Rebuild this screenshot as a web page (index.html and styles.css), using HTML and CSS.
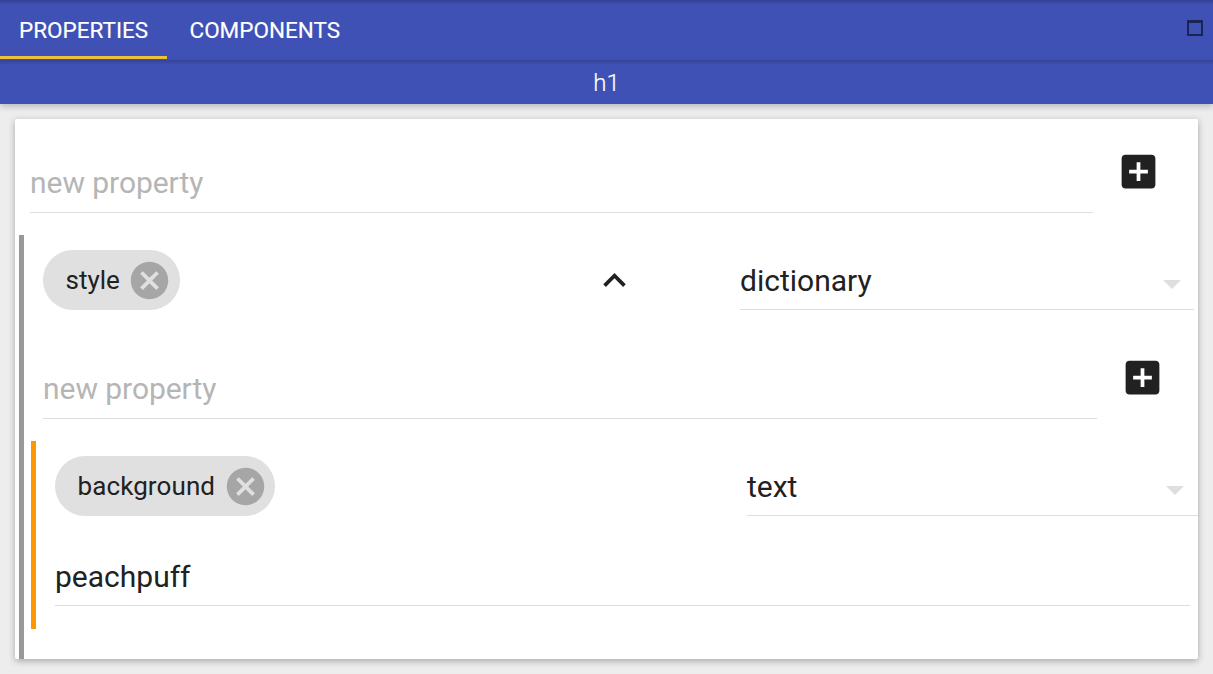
FILE: index.html
```html
<!DOCTYPE html>
<html lang="en">
<head>
<meta charset="utf-8">
<title>Properties</title>
<link rel="stylesheet" href="styles.css">
</head>
<body>
<header class="tabs">
  <div class="tab active"><span class="tab-label">PROPERTIES</span></div>
  <div class="tab"><span class="tab-label">COMPONENTS</span></div>
  <svg class="window-icon" viewBox="0 0 16 16"><path fill-rule="evenodd" d="M0 0h16v16H0zM2 3v11h12V3z"/></svg>
</header>
<div class="subject"><span>h1</span></div>
<main class="card">
  <div class="add-row">
    <div class="field placeholder"><span>new property</span></div>
    <svg class="icon add" viewBox="0 0 24 24"><path d="M19 3H5c-1.11 0-2 .9-2 2v14c0 1.1.89 2 2 2h14c1.1 0 2-.9 2-2V5c0-1.1-.9-2-2-2zm-2 10h-4v4h-2v-4H7v-2h4V7h2v4h4v2z"/></svg>
  </div>
  <section class="group">
    <div class="prop-row">
      <div class="chip"><span>style</span><svg class="icon cancel" viewBox="0 0 24 24"><path d="M12 2C6.47 2 2 6.47 2 12s4.47 10 10 10 10-4.47 10-10S17.53 2 12 2zm5 13.59L15.59 17 12 13.41 8.41 17 7 15.59 10.59 12 7 8.41 8.41 7 12 10.59 15.59 7 17 8.41 13.41 12 17 15.59z"/></svg></div>
      <svg class="icon collapse" viewBox="0 0 24 24"><path d="M12 8l-6 6 1.41 1.41L12 10.83l4.59 4.58L18 14z"/></svg>
      <div class="select"><span>dictionary</span><svg class="caret" viewBox="0 0 18 9"><path d="M0 0h18L9 9z"/></svg></div>
    </div>
    <div class="add-row">
      <div class="field placeholder"><span>new property</span></div>
      <svg class="icon add" viewBox="0 0 24 24"><path d="M19 3H5c-1.11 0-2 .9-2 2v14c0 1.1.89 2 2 2h14c1.1 0 2-.9 2-2V5c0-1.1-.9-2-2-2zm-2 10h-4v4h-2v-4H7v-2h4V7h2v4h4v2z"/></svg>
    </div>
    <section class="group nested">
      <div class="prop-row">
        <div class="chip"><span>background</span><svg class="icon cancel" viewBox="0 0 24 24"><path d="M12 2C6.47 2 2 6.47 2 12s4.47 10 10 10 10-4.47 10-10S17.53 2 12 2zm5 13.59L15.59 17 12 13.41 8.41 17 7 15.59 10.59 12 7 8.41 8.41 7 12 10.59 15.59 7 17 8.41 13.41 12 17 15.59z"/></svg></div>
        <div class="select"><span>text</span><svg class="caret" viewBox="0 0 18 9"><path d="M0 0h18L9 9z"/></svg></div>
      </div>
      <div class="value-row"><div class="field"><span>peachpuff</span></div></div>
    </section>
  </section>
</main>
</body>
</html>
```
FILE: styles.css
```css
* { box-sizing: border-box; }
body {
  margin: 0;
  width: 1213px;
  height: 674px;
  overflow: hidden;
  background: #ededed;
  color: #212121;
  font-family: Roboto, "Liberation Sans", sans-serif;
}
svg { display: block; flex: none; }
.tabs {
  display: flex;
  height: 60px;
  background: linear-gradient(rgba(0, 0, 0, .2), transparent 5px) #3f51b5;
  color: #fff;
}
.tab {
  height: 59px;
  padding: 16px 19px 0;
  border-bottom: 3px solid transparent;
  font-size: 22.5px;
  line-height: 28px;
  -webkit-text-stroke: .15px #fff;
}
.tab.active { width: 167px; border-color: #ebc03f; }
.tab + .tab { padding-left: 22.5px; }
.tab-label { white-space: nowrap; }
.window-icon { width: 16px; height: 16px; margin: 20px 10px 0 auto; fill: #1a2455; }
.subject {
  height: 44px;
  padding-top: 7px;
  background: linear-gradient(rgba(0, 0, 0, .17), transparent 5px) #3f51b5;
  color: #fff;
  font-size: 24px;
  font-weight: 300;
  line-height: 32px;
  text-align: center;
  -webkit-text-stroke: .2px #fff;
  box-shadow: 0 3px 6px rgba(0, 0, 0, .2);
}
.card {
  width: 1183px;
  height: 540px;
  margin: 15px 0 0 15px;
  background: #fff;
  border-radius: 2px;
  box-shadow: 0 2px 7px rgba(0, 0, 0, .3);
}
.icon { width: 45px; height: 45px; fill: #212121; }
.add-row { display: flex; height: 116px; padding: 30px 0 0 15px; }
.field {
  width: 1063px;
  height: 64px;
  padding-top: 16px;
  border-bottom: 1px solid #dedede;
  font-size: 30px;
  line-height: 36px;
}
.placeholder { color: #b5b5b5; }
.placeholder span { letter-spacing: -.05px; }
.add { margin-left: 23px; }
.group {
  height: 424px;
  margin-left: 4px;
  border-left: 5px solid #999;
}
.prop-row { display: flex; height: 90px; padding: 15px 0 0 19px; }
.chip {
  display: flex;
  align-items: center;
  height: 60px;
  padding: 0 7.5px 0 22.5px;
  border-radius: 30px;
  background: #e0e0e0;
  font-size: 26px;
}
.chip span { padding-right: 7.5px; }
.nested .chip span { padding-right: 7.5px; letter-spacing: .1px; }
.nested .chip { padding-right: 7px; }
.cancel { fill: #a6a6a6; }
.collapse { margin: 8px 0 0 412.5px; }
.select {
  display: flex;
  justify-content: space-between;
  width: 454px;
  height: 60px;
  margin-left: auto;
  margin-right: 4px;
  padding: 13px 13px 0 0;
  border-bottom: 1px solid #dedede;
  font-size: 30px;
  line-height: 36px;
}
.caret { width: 18px; height: 9px; margin-top: 16.5px; fill: #dedede; }
.group .add-row { padding-left: 19px; }
.group .add-row .field { width: 1054px; }
.group .group { height: 188px; margin-left: 7px; border-color: #ff9800; }
.nested .select { width: 451px; margin-right: 0; padding-right: 14px; }
.value-row { height: 98px; padding: 11px 0 0 19px; }
.nested .value-row .field { width: 1135px; padding-top: 17px; }
```
